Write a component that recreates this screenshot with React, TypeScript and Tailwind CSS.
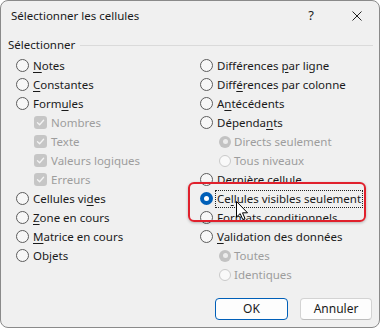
import type { ReactNode } from "react";

// text with one underlined mnemonic letter
function M({ t, i }: { t: string; i: number }) {
  return (
    <>
      {t.slice(0, i)}
      <span className="underline underline-offset-[2px]">{t[i]}</span>
      {t.slice(i + 1)}
    </>
  );
}

function Radio({ checked }: { checked?: boolean }) {
  if (checked) {
    return (
      <span className="w-[13px] h-[13px] rounded-full bg-[#005fb8] flex items-center justify-center shrink-0">
        <span className="w-[5px] h-[5px] rounded-full bg-white" />
      </span>
    );
  }
  return <span className="w-[13px] h-[13px] rounded-full border border-[#5c5c5c] bg-[#f7f7f7] shrink-0" />;
}

function SubRadio({ checked }: { checked?: boolean }) {
  if (checked) {
    return (
      <span className="w-[12px] h-[12px] rounded-full bg-[#c2c2c2] flex items-center justify-center shrink-0">
        <span className="w-[5px] h-[5px] rounded-full bg-[#ececec]" />
      </span>
    );
  }
  return <span className="w-[12px] h-[12px] rounded-full border border-[#cacaca] bg-[#f9f9f9] shrink-0" />;
}

function DisabledCheck() {
  return (
    <span className="w-[13px] h-[13px] rounded-[3px] bg-[#c6c6c6] flex items-center justify-center shrink-0">
      <svg width="9" height="9" viewBox="0 0 9 9" fill="none">
        <path d="M1.5 4.8 L3.6 6.8 L7.6 2.2" stroke="#f4f4f4" strokeWidth="1.3" strokeLinecap="round" strokeLinejoin="round" />
      </svg>
    </span>
  );
}

function Row({ children }: { children: ReactNode }) {
  return <div className="h-[19px] flex items-center">{children}</div>;
}

function RadioRow({ label, checked, focus }: { label: ReactNode; checked?: boolean; focus?: boolean }) {
  return (
    <Row>
      <Radio checked={checked} />
      <span
        className={
          focus
            ? "ml-[2px] px-[1px] leading-[16px] border border-dotted border-[#222] text-[#1a1a1a]"
            : "ml-[4px] text-[#1a1a1a]"
        }
      >
        {label}
      </span>
    </Row>
  );
}

function CheckRow({ label }: { label: string }) {
  return (
    <Row>
      <span className="w-[18px]" />
      <DisabledCheck />
      <span className="ml-[4px] text-[#9d9d9d]">{label}</span>
    </Row>
  );
}

function SubRadioRow({ label, checked }: { label: string; checked?: boolean }) {
  return (
    <Row>
      <span className="w-[19px]" />
      <SubRadio checked={checked} />
      <span className="ml-[3px] text-[#9d9d9d]">{label}</span>
    </Row>
  );
}

export default function App() {
  return (
    <div
      className="w-[380px] h-[330px] bg-white overflow-hidden text-[11.5px] text-[#1a1a1a]"
      style={{ fontFamily: '"Noto Sans", "Open Sans", sans-serif' }}
    >
      <div className="relative w-[380px] h-[328px] bg-[#f0f0f0] border border-[#8a8a8a] rounded-[8px] flex flex-col">
        {/* title bar */}
        <div className="h-[29px] flex items-center pl-[10px]">
          <span className="text-[11.5px]">Sélectionner les cellules</span>
          <span className="ml-auto text-[13px] mr-[38px]">?</span>
          <svg width="10" height="10" viewBox="0 0 10 10" className="mr-[17px]">
            <path d="M0.5 0.5 L9.5 9.5 M9.5 0.5 L0.5 9.5" stroke="#222" strokeWidth="1" />
          </svg>
        </div>

        {/* group header */}
        <div className="h-[26px] pt-[4px] flex items-center pl-[7px] pr-[6px]">
          <span>Sélectionner</span>
          <span className="flex-1 h-px bg-[#dadada] ml-[5px]" />
        </div>

        {/* options */}
        <div className="grid grid-cols-[184px_1fr] pl-[15px]">
          <div className="flex flex-col">
            <RadioRow label={<M t="Notes" i={0} />} />
            <RadioRow label={<M t="Constantes" i={0} />} />
            <RadioRow label={<M t="Formules" i={4} />} />
            <CheckRow label="Nombres" />
            <CheckRow label="Texte" />
            <CheckRow label="Valeurs logiques" />
            <CheckRow label="Erreurs" />
            <RadioRow label={<M t="Cellules vides" i={11} />} />
            <RadioRow label={<M t="Zone en cours" i={0} />} />
            <RadioRow label={<M t="Matrice en cours" i={0} />} />
            <RadioRow label={<M t="Objets" i={2} />} />
          </div>
          <div className="flex flex-col">
            <RadioRow label={<M t="Différences par ligne" i={12} />} />
            <RadioRow label={<M t="Différences par colonne" i={4} />} />
            <RadioRow label={<M t="Antécédents" i={1} />} />
            <RadioRow label={<M t="Dépendants" i={7} />} />
            <SubRadioRow label="Directs seulement" checked />
            <SubRadioRow label="Tous niveaux" />
            <RadioRow label="Dernière cellule" />
            <RadioRow label={<M t="Cellules visibles seulement" i={2} />} checked focus />
            <RadioRow label="Formats conditionnels" />
            <RadioRow label={<M t="Validation des données" i={0} />} />
            <SubRadioRow label="Toutes" checked />
            <SubRadioRow label="Identiques" />
          </div>
        </div>

        {/* buttons */}
        <div className="flex justify-end gap-[12px] pr-[7px] mt-[14px]">
          <button className="w-[73px] h-[22px] rounded-[4px] bg-[#fdfdfd] border border-[#005fb8] text-[12px]">
            OK
          </button>
          <button className="w-[72px] h-[22px] rounded-[4px] bg-[#fdfdfd] border border-[#d3d3d3] border-b-[#bdbdbd] text-[12px]">
            Annuler
          </button>
        </div>

        {/* red highlight */}
        <div className="absolute left-[187px] top-[181px] w-[178px] h-[40px] rounded-[6px] border-2 border-[#e0202c] shadow-[0_1px_3px_rgba(0,0,0,0.25)] pointer-events-none" />

        {/* mouse cursor */}
        <svg className="absolute left-[235px] top-[200px]" width="13" height="20" viewBox="0 0 13 20">
          <path
            d="M0.5 0.5 L0.5 16 L4.2 12.6 L6.8 18.6 L9 17.6 L6.5 11.8 L11.5 11.8 Z"
            fill="#fff"
            stroke="#000"
            strokeWidth="1"
            strokeLinejoin="round"
          />
        </svg>
      </div>
    </div>
  );
}
